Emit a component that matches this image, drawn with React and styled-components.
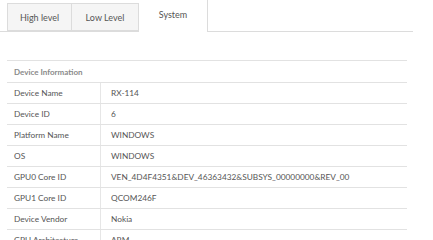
import React from 'react';
import styled, { createGlobalStyle } from 'styled-components';

const GlobalStyle = createGlobalStyle`
  body {
    margin: 0;
    background: #ffffff;
    font-family: 'Lato', 'Open Sans', sans-serif;
  }
`;

const Page = styled.div`
  width: 433px;
  height: 240px;
  overflow: hidden;
  background: #ffffff;
`;

const TabBar = styled.div`
  display: flex;
  align-items: flex-end;
  width: 406px;
  height: 31px;
  padding-left: 7px;
  border-bottom: 1px solid #dcdcdc;
`;

const Tab = styled.div`
  display: flex;
  align-items: center;
  justify-content: center;
  box-sizing: border-box;
  width: ${(p) => p.$width}px;
  height: ${(p) => (p.$active ? 32 : 28)}px;
  margin-bottom: ${(p) => (p.$active ? -1 : 0)}px;
  padding-bottom: ${(p) => (p.$active ? 4 : 0)}px;
  background: ${(p) => (p.$active ? '#ffffff' : '#f5f5f5')};
  border: 1px solid #dcdcdc;
  border-left-width: ${(p) => (p.$first ? 1 : 0)}px;
  border-top-width: ${(p) => (p.$active ? 0 : 1)}px;
  border-bottom: ${(p) => (p.$active ? 'none' : '1px solid #dcdcdc')};
  font-size: 9px;
  color: #555555;
`;

const Content = styled.div`
  padding: 28px 0 0 7px;
`;

const Table = styled.div`
  width: 400px;
  border-top: 1px solid #e2e2e2;
`;

const HeaderRow = styled.div`
  height: 21px;
  display: flex;
  align-items: center;
  padding-left: 7px;
  border-bottom: 1px solid #e2e2e2;
  font-size: 8px;
  font-weight: 700;
  color: #8a8a8a;
`;

const Row = styled.div`
  display: grid;
  grid-template-columns: 93px 1fr;
  height: 20px;
  border-bottom: 1px solid #e2e2e2;
  font-size: 8.3px;
  color: #555555;
`;

const Cell = styled.div`
  display: flex;
  align-items: center;
  padding-left: ${(p) => (p.$value ? 10 : 7)}px;
  border-left: ${(p) => (p.$value ? '1px solid #e6e6e6' : 'none')};
  white-space: nowrap;
`;

const tabs = [
  { label: 'High level', width: 65 },
  { label: 'Low Level', width: 67 },
  { label: 'System', width: 69, active: true },
];

const rows = [
  ['Device Name', 'RX-114'],
  ['Device ID', '6'],
  ['Platform Name', 'WINDOWS'],
  ['OS', 'WINDOWS'],
  ['GPU0 Core ID', 'VEN_4D4F4351&DEV_46363432&SUBSYS_00000000&REV_00'],
  ['GPU1 Core ID', 'QCOM246F'],
  ['Device Vendor', 'Nokia'],
  ['GPU Architecture', 'ARM'],
];

export default function App() {
  return (
    <Page>
      <GlobalStyle />
      <TabBar>
        {tabs.map((t, i) => (
          <Tab key={t.label} $width={t.width} $active={t.active} $first={i === 0}>
            {t.label}
          </Tab>
        ))}
      </TabBar>
      <Content>
        <Table>
          <HeaderRow>Device Information</HeaderRow>
          {rows.map(([k, v]) => (
            <Row key={k}>
              <Cell>{k}</Cell>
              <Cell $value>{v}</Cell>
            </Row>
          ))}
        </Table>
      </Content>
    </Page>
  );
}
